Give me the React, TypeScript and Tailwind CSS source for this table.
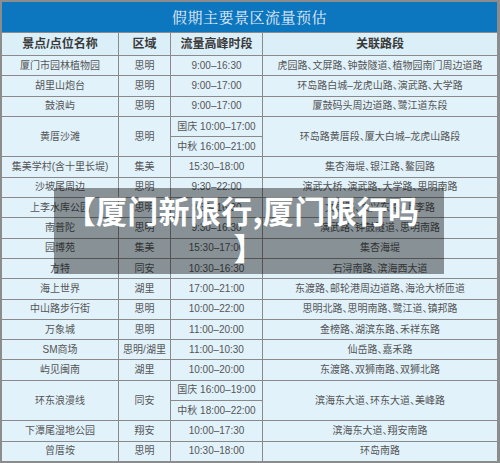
import React from "react";

type Row = {
  name: string;
  area: string;
  times: string[];
  roads: string;
};

const rows: Row[] = [
  { name: "厦门市园林植物园", area: "思明", times: ["9:00–16:30"], roads: "虎园路、文屏路、钟鼓隧道、植物园南门周边道路" },
  { name: "胡里山炮台", area: "思明", times: ["9:00–17:00"], roads: "环岛路白城–龙虎山路、演武路、大学路" },
  { name: "鼓浪屿", area: "思明", times: ["9:00–17:00"], roads: "厦鼓码头周边道路、鹭江道东段" },
  { name: "黄厝沙滩", area: "思明", times: ["国庆 10:00–17:00", "中秋 16:00–21:00"], roads: "环岛路黄厝段、厦大白城–龙虎山路段" },
  { name: "集美学村(含十里长堤)", area: "集美", times: ["15:30–18:00"], roads: "集杏海堤、银江路、鳌园路" },
  { name: "沙坡尾周边", area: "思明", times: ["9:30–22:00"], roads: "演武大桥、演武路、大学路、思明南路" },
  { name: "上李水库公园", area: "思明", times: ["9:30–16:30"], roads: "文屏路、文兴东路、上李路" },
  { name: "南普陀", area: "思明", times: ["9:30–16:30"], roads: "演武路、钟鼓隧道、思明南路" },
  { name: "园博苑", area: "集美", times: ["15:30–17:00"], roads: "集杏海堤" },
  { name: "方特", area: "同安", times: ["10:30–16:30"], roads: "石浔南路、滨海西大道" },
  { name: "海上世界", area: "湖里", times: ["17:00–21:00"], roads: "东渡路、邮轮港周边道路、海沧大桥匝道" },
  { name: "中山路步行街", area: "思明", times: ["10:00–22:00"], roads: "思明北路、思明南路、鹭江道、镇邦路" },
  { name: "万象城", area: "思明", times: ["11:00–20:00"], roads: "金榜路、湖滨东路、禾祥东路" },
  { name: "SM商场", area: "思明/湖里", times: ["11:00–10:30"], roads: "仙岳路、嘉禾路" },
  { name: "屿见闽南", area: "湖里", times: ["10:00–20:00"], roads: "东渡路、双狮南路、双狮北路" },
  { name: "环东浪漫线", area: "同安", times: ["国庆 16:00–19:00", "中秋 18:00–22:00"], roads: "滨海东大道、环东大道、美峰路" },
  { name: "下潭尾湿地公园", area: "翔安", times: ["10:00–17:30"], roads: "滨海东大道、翔安南路" },
  { name: "曾厝垵", area: "思明", times: ["10:30–18:00"], roads: "环岛南路" },
];

const cell = "flex items-center justify-center bg-[#e1f2fb] text-[10px] text-[#555] leading-none whitespace-nowrap";
const head = "flex items-center justify-center bg-[#dbeff9] text-[12px] font-bold text-[#3a3a3a] leading-none";

export default function App() {
  return (
    <div className="relative w-[500px] h-[463px] flex flex-col border-l-2 border-t-2 border-b-2 border-r-[3px] border-[#8c8c8c] font-['Liberation_Sans','Noto_Sans_CJK_SC',sans-serif]">
      {/* 标题 */}
      <div className="h-[30px] shrink-0 flex items-center justify-center bg-[#0c76bf] text-[15px] text-[#e4edf6] tracking-[0.5px] font-['Noto_Serif_CJK_SC','Noto_Sans_CJK_SC',serif]">
        假期主要景区流量预估
      </div>

      {/* 表格 */}
      <div className="flex-1 grid grid-cols-[116px_51px_91px_1fr] grid-rows-[22px_repeat(20,minmax(0,1fr))] gap-px pt-px bg-[#8a8a8a]">
        <div className={head}>景点/点位名称</div>
        <div className={head}>区域</div>
        <div className={head}>流量高峰时段</div>
        <div className={head}>关联路段</div>

        {rows.map((r) => {
          const span = r.times.length === 2 ? "row-span-2" : "";
          return (
            <React.Fragment key={r.name}>
              <div className={`${cell} ${span}`}>{r.name}</div>
              <div className={`${cell} ${span}`}>{r.area}</div>
              <div className={cell}>{r.times[0]}</div>
              <div className={`${cell} ${span} [font-feature-settings:'halt']`}>{r.roads}</div>
              {r.times[1] && <div className={cell}>{r.times[1]}</div>}
            </React.Fragment>
          );
        })}
      </div>

      {/* 覆盖标题 */}
      <div className="absolute left-[52px] top-[186px] w-[390px] h-[86px] bg-black/40 pt-[3px] text-center text-[31px] leading-[37px] font-bold text-white font-['Noto_Sans_CJK_SC',sans-serif]">
        <div className="-ml-[14px] whitespace-nowrap tracking-[0.3px]">【厦门新限行,厦门限行吗</div>
        <div>】</div>
      </div>
    </div>
  );
}
